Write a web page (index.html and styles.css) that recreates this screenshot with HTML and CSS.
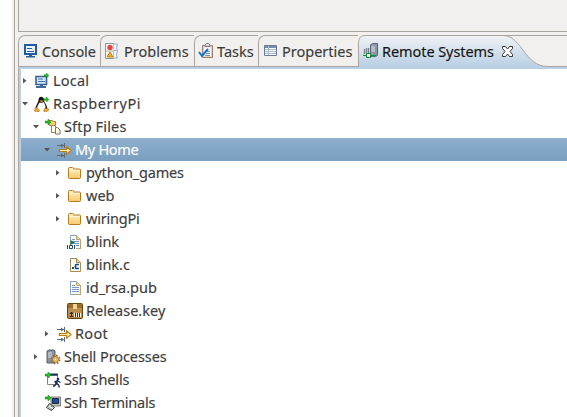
FILE: index.html
```
<!DOCTYPE html>
<html lang="en">
<head>
<meta charset="utf-8">
<title>Remote Systems</title>
<link rel="stylesheet" href="styles.css">
</head>
<body>
<svg class="defs" aria-hidden="true">
  <defs>
    <linearGradient id="gold" x1="0" y1="0" x2="0" y2="1"><stop offset="0" stop-color="#fff3c4"/><stop offset="1" stop-color="#f5c96c"/></linearGradient>
    <linearGradient id="tabfill" x1="0" y1="0" x2="0" y2="1"><stop offset="0" stop-color="#eff2f5"/><stop offset="1" stop-color="#b9cfe4"/></linearGradient>
    <symbol id="folder" viewBox="0 0 16 16"><path d="M1.500 12.500v-9q0-1 1-1h3q1 0 1 1v.5h6q1 0 1 1v7.500q0 1-1 1h-10q-1 0-1-1z" fill="url(#gold)" stroke="#b87820"/><path d="M2.500 5.500h10" stroke="#fff5d4"/></symbol>
    <symbol id="filter" viewBox="0 0 16 16"><path d="M1 3.500h7M1 13.500h7M8.500 1v5M8.500 11v5" stroke="#5c6b78" fill="none"/><path d="M5 1.500l3 2-3 2zM5 11.500l3 2-3 2z" fill="#5c6b78"/><path d="M3.500 7.500h7V4.700l4.500 3.800-4.500 3.800V9.500h-7z" fill="#fff1b5" stroke="#c07a12" stroke-width="1.200"/></symbol>
    <symbol id="plus-arrow" viewBox="0 0 6 6"><path d="M0 2h3V0l3 3-3 3V4H0z" fill="#22c322" stroke="#08760c" stroke-width=".5"/></symbol>
    <symbol id="open" viewBox="0 0 7 7"><path d="M0 2h6L3 5.500z" fill="#555"/></symbol>
    <symbol id="closed" viewBox="0 0 7 7"><path d="M1 1v5.500l3.500-2.750z" fill="#555"/></symbol>
    <symbol id="page" viewBox="0 0 16 16"><path d="M3.500 1.500h6l4 4v9h-10z" fill="#f8fbff" stroke="#8d9fc0"/><path d="M9.500 1.500v4h4" fill="#e8d59b" stroke="#b9a56b"/><path d="M13.500 5.500v9h-5" fill="none" stroke="#b9a56b"/><path d="M5 5.500h3M5 7.500h7M5 9.500h7M5 11.500h7" stroke="#7896c8"/></symbol>
  </defs>
</svg>
<div class="window">
  <div class="upper"></div>
  <div class="view">
    <div class="tabs">
      <div class="tab console"><svg class="icon" viewBox="0 0 16 16"><path d="M2 2h11v9H2z" fill="#e8f4fc" stroke="#2459a4" stroke-width="2"/><path d="M4 5.500h5M4 8.500h7" stroke="#245ba3"/><path d="M6 12h3v1H6zM3 13h9v1.500H3z" fill="#2d5d9d"/></svg><span>Console</span></div>
      <div class="tab problems"><svg class="icon" viewBox="0 0 16 16"><path d="M1.500.5h8v15h-8z" fill="#fff" stroke="#8b9a83"/><path d="M9.500 1h4l-1 4 1 3-1 4 1 3h-4M10 7.500h3" fill="#f4f8fd" stroke="#9badc8"/><circle cx="6" cy="4.500" r="2.700" fill="#e44246"/><path d="M2 8h8" stroke="#b9aa7e"/><path d="M6 9l3 5H3z" fill="#f5b235" stroke="#c17b16"/></svg><span>Problems</span></div>
      <div class="tab tasks"><svg class="icon" viewBox="0 0 16 16"><path d="M4.500 2.500h10v12h-10z" fill="#e5d3bd" stroke="#9a806c"/><path d="M6 4h7v9H6z" fill="#f4f8ff"/><path d="M7 3.500h5V2L10.500.500h-2L7 2z" fill="#ddd" stroke="#777"/><path d="M9 8.500h3M8 10.500h4M7 12.500h5" stroke="#7490bd"/><path d="M1 9l3 4 6-7" fill="none" stroke="#1672c7" stroke-width="2"/></svg><span>Tasks</span></div>
      <div class="tab properties"><svg class="icon" viewBox="0 0 16 16"><path d="M1.500 2.500h12v10h-12z" fill="#fff" stroke="#667b9d"/><path d="M2 3h11v2H2z" fill="#7d8ca5"/><path d="M2 6.500h11M2 8.500h11M2 10.500h11M5.500 3v9" stroke="#a9b7cc"/></svg><span>Properties</span></div>
      <div class="tab active"><svg class="tab-shape" viewBox="0 0 190 32"><path d="M0 32V7Q1 .5 7 .5H145C164 .5 166 31.500 190 31.500V32z" fill="url(#tabfill)"/><path d="M.5 32V7Q1 .5 7 .5H145C164 .5 166 31.500 190 31.500M145 .5H190" fill="none" stroke="#aaa69f"/></svg><svg class="icon" viewBox="0 0 16 16"><path d="M7.500 2l2-1.500h5v12l-2 1h-5z" fill="#8d97a6" stroke="#586272"/><path d="M8 4h4M8 6h4M8 8h4" stroke="#d8e0e8"/><path d="M0 12.500h13" stroke="#16873b"/><path d="M1.500 6v5M3.500 5v6M5.500 5v5" stroke="#777f8b" stroke-width="1.300"/><path d="M3.500 10.500h4v4h-4z" fill="#eaffea" stroke="#16873b"/></svg><span>Remote Systems</span><svg class="close" viewBox="0 0 11 11"><path d="M.5.500h3l2 2.500 2-2.500h3v2L8 5.500l2.500 3v2h-3l-2-2.500-2 2.500h-3v-2l2.500-3L.5 2.500z" fill="#fff" stroke="#333"/></svg></div>
      <div class="tab-end"></div>
    </div>
    <div class="tree">
      <div class="row"><svg class="arrow"><use href="#closed"/></svg><svg class="icon" viewBox="0 0 16 16"><path d="M2 3.500h10.500v8H2z" fill="#d7eafa" stroke="#355f94" stroke-width="1.600"/><path d="M4 6h5M4 8.500h7" stroke="#3f6fab"/><path d="M6 12h3v1H6zM2 13h10v2H2z" fill="#416897"/><use href="#plus-arrow" x="10" width="5" height="5"/></svg><span class="local">Local</span></div>
      <div class="row"><svg class="arrow"><use href="#open"/></svg><svg class="icon" viewBox="0 0 16 16"><path d="M4.500 4C4.500-.5 10-.5 10 4c0 3 4 5 3 10H2C1 9 4.500 7 4.500 4z" fill="#151515"/><path d="M5.500 6.500c2 1 4-.5 4-.5 2 3 3 6 1 8H4c-2-2 0-5 1.500-7.500z" fill="#fff"/><path d="M5.500 4.500h4L7.500 6.500z" fill="#f2a51d"/><path d="M1.500 11l4 3-1 2-4-1zM11 12l1 1 1.500-1 1.500 2-3.500 2-2-1z" fill="#f3b02f" stroke="#a76514" stroke-width=".6"/><use href="#plus-arrow" x="10" y="1" width="5" height="5"/></svg><span class="host">RaspberryPi</span></div>
      <div class="row level-1 sftp"><svg class="arrow"><use href="#open"/></svg><svg class="icon" viewBox="0 0 16 16"><path d="M4.500 5.500v-4h3l1 1h2v4h-6z" fill="#f6cf75" stroke="#b97c22"/><path d="M6.500 7v6h2M7 9.500h3" stroke="#777" fill="none"/><path d="M6.500 6.500h3l2 2v5h-5z" fill="#fffce8" stroke="#8a8569"/><path d="M10.500 8.500h2l2.500 2.500v4h-4.500z" fill="#fffce8" stroke="#7b765d"/><use href="#plus-arrow" width="6" height="6"/></svg><span>Sftp Files</span></div>
      <div class="row level-2 selected"><svg class="arrow"><use href="#open"/></svg><svg class="icon"><use href="#filter"/></svg><span>My Home</span></div>
      <div class="row level-3"><svg class="arrow"><use href="#closed"/></svg><svg class="icon"><use href="#folder"/></svg><span class="tight">python_games</span></div>
      <div class="row level-3"><svg class="arrow"><use href="#closed"/></svg><svg class="icon"><use href="#folder"/></svg><span>web</span></div>
      <div class="row level-3"><svg class="arrow"><use href="#closed"/></svg><svg class="icon"><use href="#folder"/></svg><span class="tight">wiringPi</span></div>
      <div class="row level-3"><svg class="arrow"></svg><svg class="icon" viewBox="0 0 16 16"><use href="#page"/><path d="M0 11h9v5H0z" fill="#fff"/><path d="M.5 11v4M7.500 11v4" stroke="#21456d" fill="none"/><path d="M2.500 11.500h3v3h-3z" stroke="#21456d" fill="none"/><path d="M3.500 6l4.500 2.500-4.500 2.500z" fill="#15803a"/></svg><span>blink</span></div>
      <div class="row level-3"><svg class="arrow"></svg><svg class="icon" viewBox="0 0 16 16"><path d="M3.500 1.500h6l4 4v9h-10z" fill="#f8fbff" stroke="#a58b50"/><path d="M9.500 1.500v4h4" fill="#e8d59b" stroke="#a58b50"/><path d="M5 10h2v2H5z" fill="#174c83"/><path d="M12 7.500H9.500q-1 0-1 1v2q0 1 1 1H12" stroke="#174c83" stroke-width="1.700" fill="none"/></svg><span>blink.c</span></div>
      <div class="row level-3"><svg class="arrow"></svg><svg class="icon"><use href="#page"/></svg><span>id_rsa.pub</span></div>
      <div class="row level-3"><svg class="arrow"></svg><svg class="icon" viewBox="0 0 16 16"><rect x=".5" y=".5" width="15" height="15" rx="1" fill="#b98f50" stroke="#684310"/><path d="M1 1h14v4H1z" fill="#9b6e2d"/><path d="M6 1h4v5H6z" fill="#efd39a"/><path d="M7 10h7v4H7z" fill="#fff5dc"/><path d="M8.500 10v4M10.500 10v4M12.500 10v4M4.500 9v5M2.500 13.500h4M3 11l1.500-2L6 11" stroke="#372a18" fill="none"/></svg><span>Release.key</span></div>
      <div class="row level-2"><svg class="arrow"><use href="#closed"/></svg><svg class="icon"><use href="#filter"/></svg><span class="wide">Root</span></div>
      <div class="row level-1"><svg class="arrow"><use href="#closed"/></svg><svg class="icon" viewBox="0 0 16 16"><path d="M2 2l2-1h5l1 1v11l-2 1H2z" fill="#8993a0" stroke="#555e69"/><path d="M3 4h4M3 6h4M3 8h4" stroke="#d6dde3"/><circle cx="10.500" cy="10.500" r="4.200" fill="none" stroke="#a46a20" stroke-width="1.500" stroke-dasharray="1.700 1.600"/><circle cx="10.500" cy="10.500" r="3" fill="#f7cb69" stroke="#a46a20"/><circle cx="10.500" cy="10.500" r="1.200" fill="#fff" stroke="#a46a20" stroke-width=".5"/></svg><span class="snug">Shell Processes</span></div>
      <div class="row level-1"><svg class="arrow"></svg><svg class="icon" viewBox="0 0 16 16"><path d="M2.500 3.500h10v9h-10z" fill="#fff" stroke="#888775"/><path d="M5 1.500h8v2H5z" fill="#17365f"/><circle cx="13" cy="7" r="1.300" fill="#172d60"/><path d="M12.500 8l-1.500 3 2.500 2 1 2.500M11 11l-1 2.500-2 1M12 9l-2.500 1M13 9l2.500 1.500" stroke="#172d60" stroke-width="1.400" fill="none"/><use href="#plus-arrow" width="6" height="6"/></svg><span class="tight">Ssh Shells</span></div>
      <div class="row level-1"><svg class="arrow"></svg><svg class="icon" viewBox="0 0 16 16"><path d="M6 2h9.500v9H6z" fill="#c5c3b8" stroke="#555" stroke-width=".7"/><path d="M7.500 3.500h6v5h-6z" fill="#244d96" stroke="#15284f"/><path d="M1.500 12.500l3-4 5 4-3 3z" fill="#f2f2ee" stroke="#333"/><path d="M3 11.500l4 3M4.500 10l4 3" stroke="#555" stroke-dasharray="1 1"/><use href="#plus-arrow" width="6" height="6"/></svg><span class="tight">Ssh Terminals</span></div>
    </div>
  </div>
</div>
</body>
</html>
```
FILE: styles.css
```
* { box-sizing: border-box; }
body { margin: 0; background: #fff; font-family: "Noto Sans", "Open Sans", sans-serif; font-size: 14.5px; color: #3c3c3c; -webkit-text-stroke: .15px currentColor; }
.defs { position: absolute; width: 0; height: 0; }
.window { height: 417px; margin-left: 12px; padding-left: 4px; background: linear-gradient(90deg, #f1f0ee 2px, #aaa69f 2px, #aaa69f 3px, #f1f0ee 3px); overflow: hidden; }
.upper { height: 32px; margin: 0 0 3px 2px; border-left: 1px solid #aaa69f; border-bottom: 1px solid #aaa69f; }
.view { margin-left: 2px; height: 382px; display: flex; flex-direction: column; }
.tabs { display: flex; height: 32px; flex: none; }
.tab { display: flex; align-items: center; padding-left: 4px; border: 1px solid #aaa69f; border-right: 0; border-radius: 7px 0 0 0; white-space: nowrap; flex: none; }
.tab .icon { margin-right: 3px; }
.console { width: 82px; letter-spacing: -.1px; }
.problems { width: 94px; padding-left: 3px; }
.problems .icon { margin-right: 4px; }
.tasks { width: 64px; padding-left: 3px; }
.properties { width: 100px; padding-left: 4px; }
.active { width: 190px; position: relative; border: 0; padding-left: 5px; color: #151515; letter-spacing: -.07px; }
.active > :not(.tab-shape) { position: relative; }
.tab-shape { position: absolute; left: 0; top: 0; width: 190px; height: 32px; }
.tab-end { flex: 1; border-top: 1px solid #aaa69f; border-bottom: 1px solid #aaa69f; }
.icon { width: 16px; height: 16px; flex: none; }
.close { width: 11px; height: 11px; margin-left: 8px; }
.tree { flex: 1; border-left: 1px solid #aaa69f; border-top: 2px solid #b9cfe4; background: linear-gradient(90deg, #b9cfe4 2px, #fff 2px); padding-left: 2px; }
.row { display: flex; align-items: center; height: 23px; white-space: nowrap; padding-left: 1px; }
.row span { padding-bottom: 2px; }
.arrow { width: 7px; height: 7px; margin: 0 5px 1px 0; flex: none; }
.row .icon { margin-right: 3px; }
.level-1 { padding-left: 12px; }
.level-2 { padding-left: 23px; }
.level-3 { padding-left: 34px; }
.tight { letter-spacing: -.2px; }
.snug { letter-spacing: -.07px; }
.wide { letter-spacing: .3px; }
.host { letter-spacing: .55px; }
.local { letter-spacing: .2px; }
.sftp { letter-spacing: .15px; }
.selected { color: #fff; background: linear-gradient(#8eafcd, #7b9fc0); letter-spacing: -.3px; }
```
